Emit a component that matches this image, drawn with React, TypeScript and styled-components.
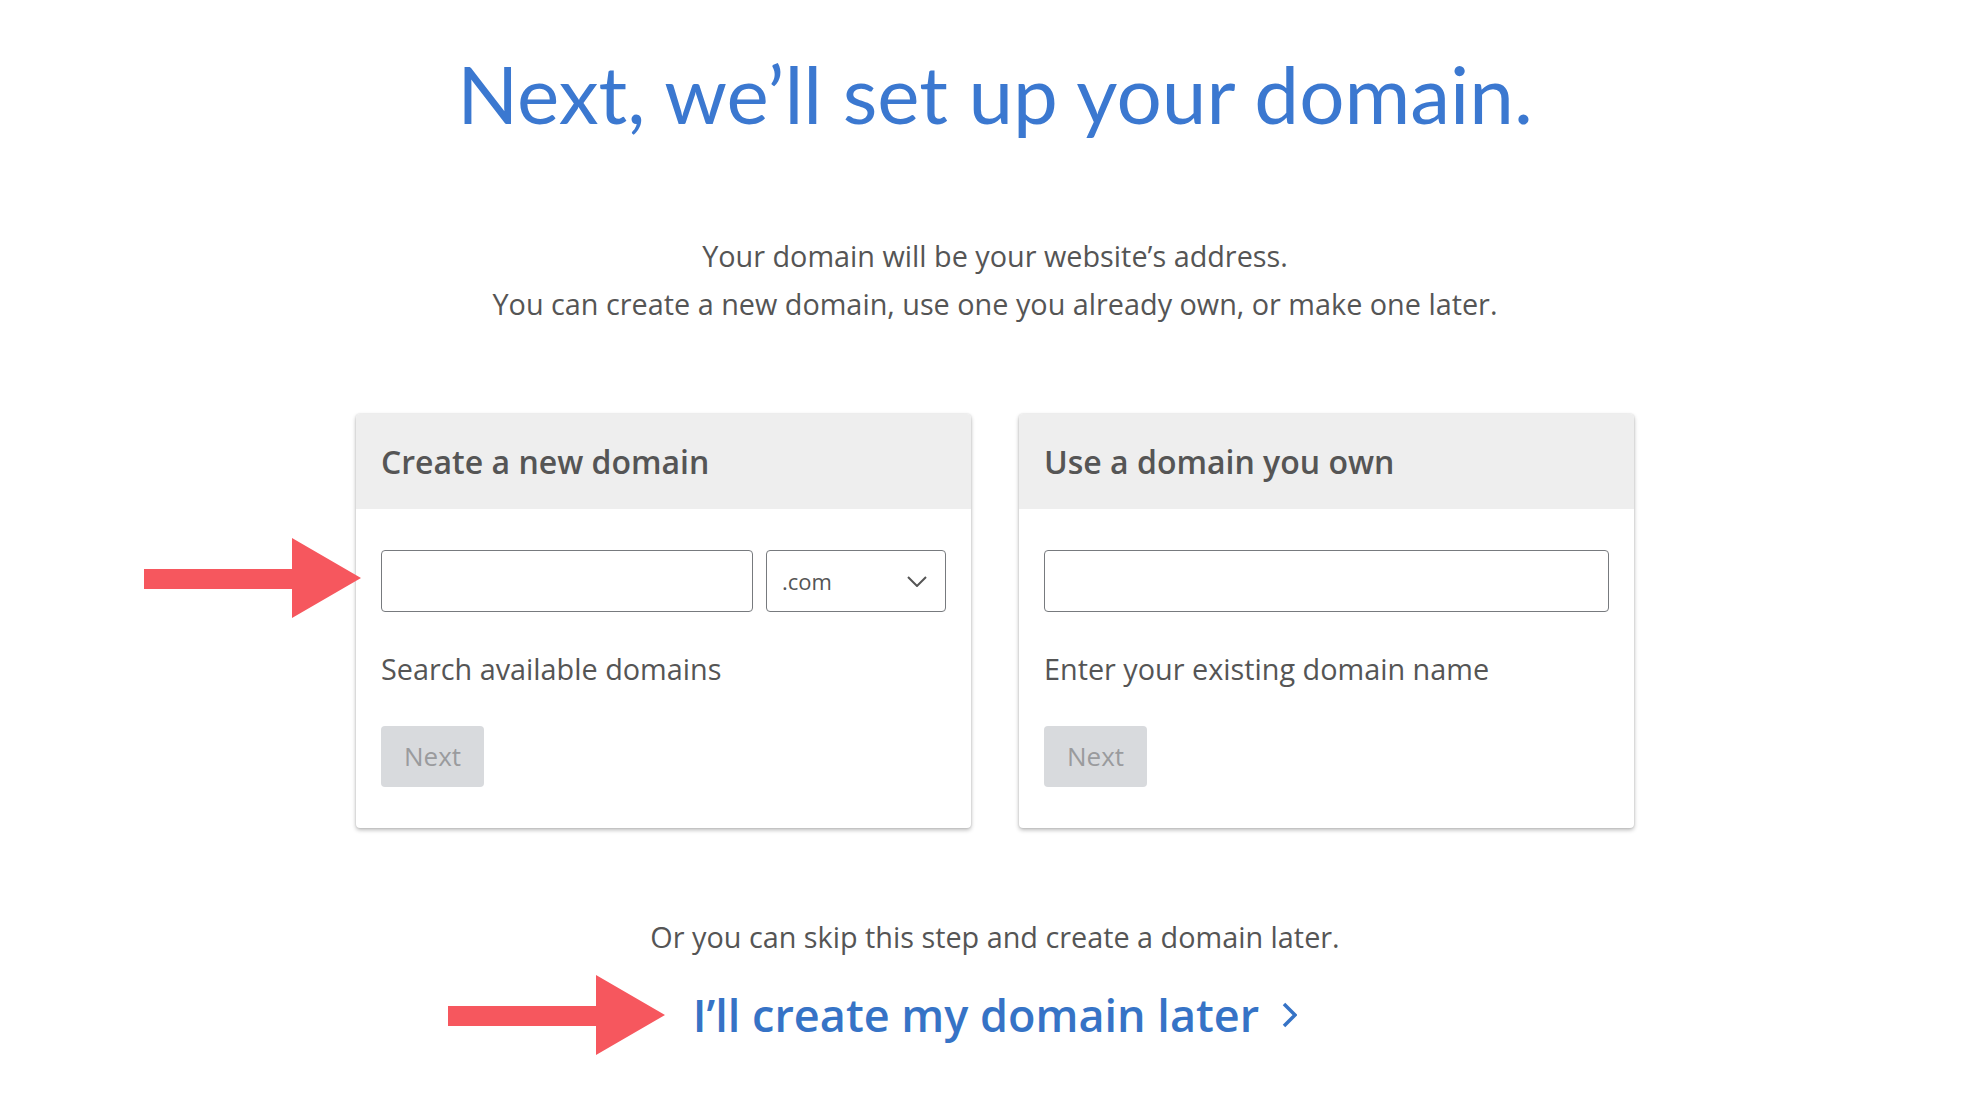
import React from "react";
import styled, { createGlobalStyle } from "styled-components";

const GlobalStyle = createGlobalStyle`
  html, body {
    margin: 0;
    padding: 0;
    background: #ffffff;
  }
  body {
    font-family: "Open Sans", "Noto Sans", Arial, sans-serif;
    color: #555555;
  }
  * { box-sizing: border-box; }
`;

const Page = styled.main`
  width: 1978px;
  min-height: 1108px;
  padding: 45px 0 0 12px;
  display: flex;
  flex-direction: column;
  align-items: center;
`;

const Title = styled.h1`
  margin: 0;
  font-family: Lato, "Open Sans", sans-serif;
  font-weight: 400;
  font-size: 80px;
  line-height: 96px;
  color: #3b78d0;
  letter-spacing: 0;
`;

const Intro = styled.div`
  margin-top: 91px;
  text-align: center;
`;

const IntroLine = styled.p`
  margin: 0;
  font-size: 28.8px;
  line-height: 48px;
  color: #555555;
`;

const Cards = styled.section`
  margin-top: 86px;
  display: grid;
  grid-template-columns: 615px 615px;
  gap: 48px;
`;

const Card = styled.div`
  position: relative;
  background: #ffffff;
  border-radius: 4px;
  box-shadow: 0 2px 4px rgba(0, 0, 0, 0.28), 0 0 2px rgba(0, 0, 0, 0.14);
`;

const CardHeader = styled.div`
  height: 95px;
  padding: 0 25px;
  display: flex;
  align-items: center;
  background: #eeeeee;
  border-radius: 4px 4px 0 0;
`;

const CardTitle = styled.h2`
  margin: 0;
  font-size: 32px;
  font-weight: 600;
  color: #555555;
`;

const CardBody = styled.div`
  padding: 41px 25px 41px;
  display: flex;
  flex-direction: column;
`;

const FieldRow = styled.div`
  display: flex;
  gap: 13px;
`;

const TextField = styled.input`
  flex: 1;
  height: 62px;
  border: 1px solid #777a7e;
  border-radius: 4px;
  padding: 0 16px;
  font-family: inherit;
  font-size: 24px;
  color: #555;
  background: #fff;
  outline: none;
`;

const Select = styled.div`
  width: 180px;
  height: 62px;
  border: 1px solid #777a7e;
  border-radius: 4px;
  padding: 0 18px 0 15px;
  display: flex;
  align-items: center;
  justify-content: space-between;
  font-size: 22px;
  color: #555555;
`;

const Hint = styled.p`
  margin: 36px 0;
  font-size: 28.8px;
  line-height: 42px;
  color: #555555;
`;

const NextButton = styled.button`
  align-self: flex-start;
  width: 103px;
  height: 61px;
  padding: 0 0 2px;
  border: none;
  border-radius: 4px;
  background: #d8dadd;
  color: #9a9b9d;
  font-family: inherit;
  font-size: 26px;
  cursor: not-allowed;
`;

const Arrow = styled.svg<{ $left: number; $top: number }>`
  position: absolute;
  left: ${(p) => p.$left}px;
  top: ${(p) => p.$top}px;
  z-index: 2;
`;

const SkipText = styled.p`
  margin: 88px 0 0;
  font-size: 28.8px;
  line-height: 42px;
  color: #555555;
`;

const LaterLink = styled.a`
  position: relative;
  margin-top: 25px;
  display: inline-flex;
  align-items: center;
  gap: 23px;
  font-size: 45px;
  font-weight: 600;
  line-height: 64px;
  color: #3673c6;
  text-decoration: none;
  cursor: pointer;
`;

const RedArrow = ({ left, top }: { left: number; top: number }) => (
  <Arrow $left={left} $top={top} width="217" height="80" viewBox="0 0 217 80">
    <polygon
      points="0,31 148,31 148,0 217,40 148,80 148,51 0,51"
      fill="#f6575e"
    />
  </Arrow>
);

export default function App() {
  return (
    <>
      <GlobalStyle />
      <Page>
        <Title>Next, we’ll set up your domain.</Title>
        <Intro>
          <IntroLine>Your domain will be your website’s address.</IntroLine>
          <IntroLine>
            You can create a new domain, use one you already own, or make one later.
          </IntroLine>
        </Intro>

        <Cards>
          <Card>
            <RedArrow left={-212} top={124} />
            <CardHeader>
              <CardTitle>Create a new domain</CardTitle>
            </CardHeader>
            <CardBody>
              <FieldRow>
                <TextField type="text" aria-label="New domain" />
                <Select>
                  <span>.com</span>
                  <svg width="20" height="11" viewBox="0 0 20 11">
                    <polyline
                      points="1,1 10,10 19,1"
                      fill="none"
                      stroke="#555"
                      strokeWidth="2"
                    />
                  </svg>
                </Select>
              </FieldRow>
              <Hint>Search available domains</Hint>
              <NextButton disabled>Next</NextButton>
            </CardBody>
          </Card>

          <Card>
            <CardHeader>
              <CardTitle>Use a domain you own</CardTitle>
            </CardHeader>
            <CardBody>
              <FieldRow>
                <TextField type="text" aria-label="Existing domain" />
              </FieldRow>
              <Hint>Enter your existing domain name</Hint>
              <NextButton disabled>Next</NextButton>
            </CardBody>
          </Card>
        </Cards>

        <SkipText>Or you can skip this step and create a domain later.</SkipText>
        <LaterLink>
          <RedArrow left={-245} top={-8} />
          <span>I’ll create my domain later</span>
          <svg width="15" height="26" viewBox="0 0 15 26">
            <polyline
              points="2,2 13,13 2,24"
              fill="none"
              stroke="#3673c6"
              strokeWidth="3.5"
            />
          </svg>
        </LaterLink>
      </Page>
    </>
  );
}
